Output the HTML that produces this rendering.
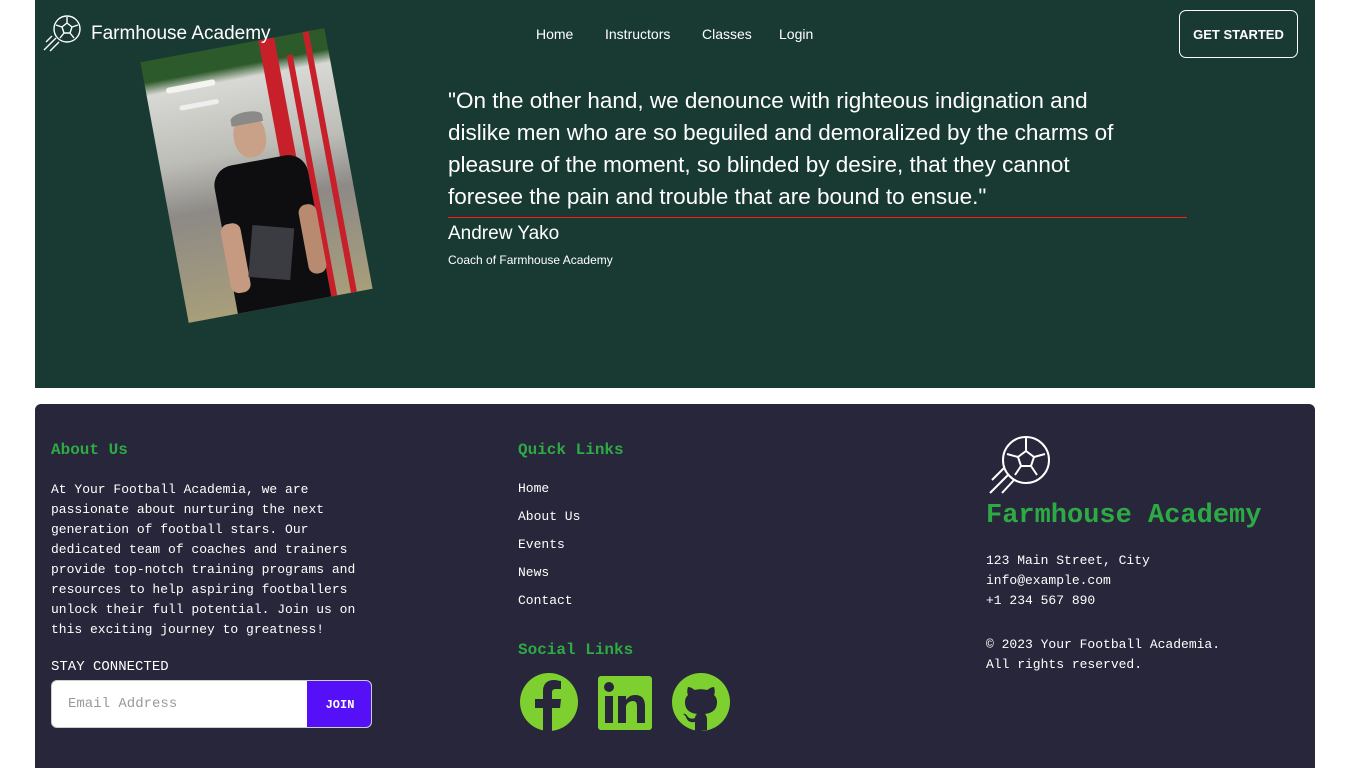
<!DOCTYPE html>
<html><head><meta charset="utf-8"><style>
*{margin:0;padding:0;box-sizing:border-box}
body{width:1346px;height:768px;background:#fff;position:relative;overflow:hidden;font-family:"Liberation Sans",sans-serif}
.hero{position:absolute;left:35px;top:0;width:1280px;height:388px;background:#183a32;color:#fff}
.abs{position:absolute}
.nav a{position:absolute;top:26px;font-size:14px;color:#fff;text-decoration:none}
.btn{position:absolute;left:1144px;top:10px;width:119px;height:48px;border:1.5px solid #fff;border-radius:7px;font-weight:bold;font-size:13px;display:flex;align-items:center;justify-content:center}
.quote{position:absolute;left:413px;top:85px;width:700px;font-size:22.5px;line-height:32px}
.line{position:absolute;left:413px;top:217px;width:739px;height:1px;background:#ff1a1a;z-index:5}
.photo{position:absolute;left:128px;top:43px;width:187px;height:265px;transform:rotate(-10.5deg);overflow:hidden;background:linear-gradient(180deg,#2d5a2a 0,#2d5a2a 8%,#d8d8d4 13%,#bdbdb8 40%,#8d8a86 60%,#a89e7a 100%)}
.foot{position:absolute;left:35px;top:404px;width:1280px;height:364px;background:#27263a;border-radius:6px 6px 0 0;color:#fff;font-family:"Liberation Mono",monospace;font-size:13px}
.h{position:absolute;color:#2eaa45;font-weight:bold;font-size:16px}
.ql{position:absolute;left:483px;line-height:28px}
</style></head><body>
<div class="hero">
  <svg class="abs" style="left:7px;top:14px" width="42" height="40" viewBox="0 0 42 40" fill="none" stroke="#fff" stroke-width="1.4"><circle cx="25" cy="15" r="13"/><path d="M25 9l5 4-2 6h-6l-2-6zM25 9V3M30 13l6-2M28 19l4 5M22 19l-4 5M20 13l-6-2"/><path d="M14 24L2 36M17 28L8 37M10 22L4 28"/></svg>
  <div class="photo">
    <div class="abs" style="left:20px;top:30px;width:50px;height:6px;background:#f4f4f0;border-radius:3px"></div>
    <div class="abs" style="left:30px;top:50px;width:40px;height:5px;background:#eee;border-radius:3px"></div>
    <div class="abs" style="left:120px;top:-10px;width:16px;height:290px;background:#c8202a"></div>
    <div class="abs" style="left:145px;top:20px;width:6px;height:260px;background:#c8202a"></div>
    <div class="abs" style="left:165px;top:-5px;width:6px;height:280px;background:#c8202a"></div>
    <div class="abs" style="left:78px;top:72px;width:32px;height:42px;background:#c9a088;border-radius:45%"></div>
    <div class="abs" style="left:78px;top:68px;width:32px;height:12px;background:#8a8a88;border-radius:50% 50% 0 0"></div>
    <div class="abs" style="left:50px;top:118px;width:95px;height:150px;background:#0e0e10;border-radius:20px 20px 0 0"></div>
    <div class="abs" style="left:48px;top:175px;width:20px;height:70px;background:#c59a80;border-radius:8px"></div>
    <div class="abs" style="left:128px;top:170px;width:18px;height:70px;background:#b88a70;border-radius:8px"></div>
    <div class="abs" style="left:73px;top:185px;width:42px;height:52px;background:#3a3c42;transform:rotate(15deg)"></div>
  </div>
  <div class="abs" style="left:56px;top:23px;font-size:19px">Farmhouse Academy</div>
  <div class="nav"><a style="left:501px">Home</a><a style="left:570px">Instructors</a><a style="left:667px">Classes</a><a style="left:744px">Login</a></div>
  <div class="btn">GET STARTED</div>
  <div class="quote">"On the other hand, we denounce with righteous indignation and dislike men who are so beguiled and demoralized by the charms of pleasure of the moment, so blinded by desire, that they cannot foresee the pain and trouble that are bound to ensue."</div>
  <div class="line"></div>
  <div class="abs" style="left:413px;top:223px;font-size:19px">Andrew Yako</div>
  <div class="abs" style="left:413px;top:253px;font-size:12px">Coach of Farmhouse Academy</div>
</div>
<div class="foot">
  <div class="h" style="left:16px;top:37px">About Us</div>
  <div class="abs" style="left:16px;top:76px;width:310px;line-height:20px">At Your Football Academia, we are passionate about nurturing the next generation of football stars. Our dedicated team of coaches and trainers provide top-notch training programs and resources to help aspiring footballers unlock their full potential. Join us on this exciting journey to greatness!</div>
  <div class="abs" style="left:16px;top:255px;font-size:14px">STAY CONNECTED</div>
  <div class="abs" style="left:16px;top:276px;width:321px;height:48px;background:#fff;border-radius:6px;overflow:hidden;border:1px solid #ccc">
    <div class="abs" style="left:16px;top:15px;color:#999;font-size:14px">Email Address</div>
    <div class="abs" style="left:255px;top:0;width:66px;height:48px;background:#5610f8;color:#fff;font-size:12px;font-weight:bold;display:flex;align-items:center;justify-content:center">JOIN</div>
  </div>
  <div class="h" style="left:483px;top:37px">Quick Links</div>
  <div class="ql" style="top:71px">Home<br>About Us<br>Events<br>News<br>Contact</div>
  <div class="h" style="left:483px;top:237px">Social Links</div>
  <svg class="abs" style="left:484px;top:268px" width="60" height="60" viewBox="0 0 60 60"><circle cx="30" cy="30" r="29" fill="#7ed030"/><path d="M33 60V36h8l1-9h-9v-6c0-3 1-4 4-4h5v-8c-2 0-4-1-7-1-7 0-11 4-11 11v8h-8v9h8v24z" fill="#27263a"/></svg>
  <svg class="abs" style="left:563px;top:272px" width="54" height="54" viewBox="0 0 54 54"><rect width="54" height="54" rx="3" fill="#7ed030"/><rect x="7" y="20" width="8" height="27" fill="#27263a"/><circle cx="11" cy="11" r="5" fill="#27263a"/><path d="M20 20h8v4c2-3 5-5 9-5 7 0 10 4 10 11v17h-8V31c0-4-1-6-4-6s-7 2-7 6v16h-8z" fill="#27263a"/></svg>
  <svg class="abs" style="left:636px;top:268px" width="60" height="60" viewBox="0 0 60 60"><circle cx="30" cy="30" r="29" fill="#7ed030"/><path d="M24 60V50c-6 1-8-2-9-5-1-2-3-3-3-3 2-1 4 1 5 3 2 2 5 2 7 1 0-2 1-3 2-4-7-1-12-4-12-12 0-3 1-5 3-7-1-2-1-5 0-8 3 0 5 2 7 3 3-1 8-1 12 0 2-1 4-3 7-3 1 3 1 6 0 8 2 2 3 4 3 7 0 8-5 11-12 12 1 1 2 3 2 5v11z" fill="#27263a"/></svg>
  <svg class="abs" style="left:951px;top:31px" width="66" height="66" viewBox="0 0 66 66" fill="none" stroke="#fff" stroke-width="2"><circle cx="40" cy="25" r="23"/><path d="M40 16l8 6-3 9h-10l-3-9zM40 16V3M48 22l11-3M45 31l6 9M35 31l-6 9M32 22l-11-3"/><path d="M22 40L4 58M28 45L16 58M18 33L6 45"/></svg>
  <div class="abs" style="left:951px;top:97px;color:#2eaa45;font-size:27px;font-weight:bold">Farmhouse Academy</div>
  <div class="abs" style="left:951px;top:147px;line-height:20px">123 Main Street, City<br>info@example.com<br>+1 234 567 890</div>
  <div class="abs" style="left:951px;top:231px;line-height:20px">© 2023 Your Football Academia.<br>All rights reserved.</div>
</div>
</body></html>
